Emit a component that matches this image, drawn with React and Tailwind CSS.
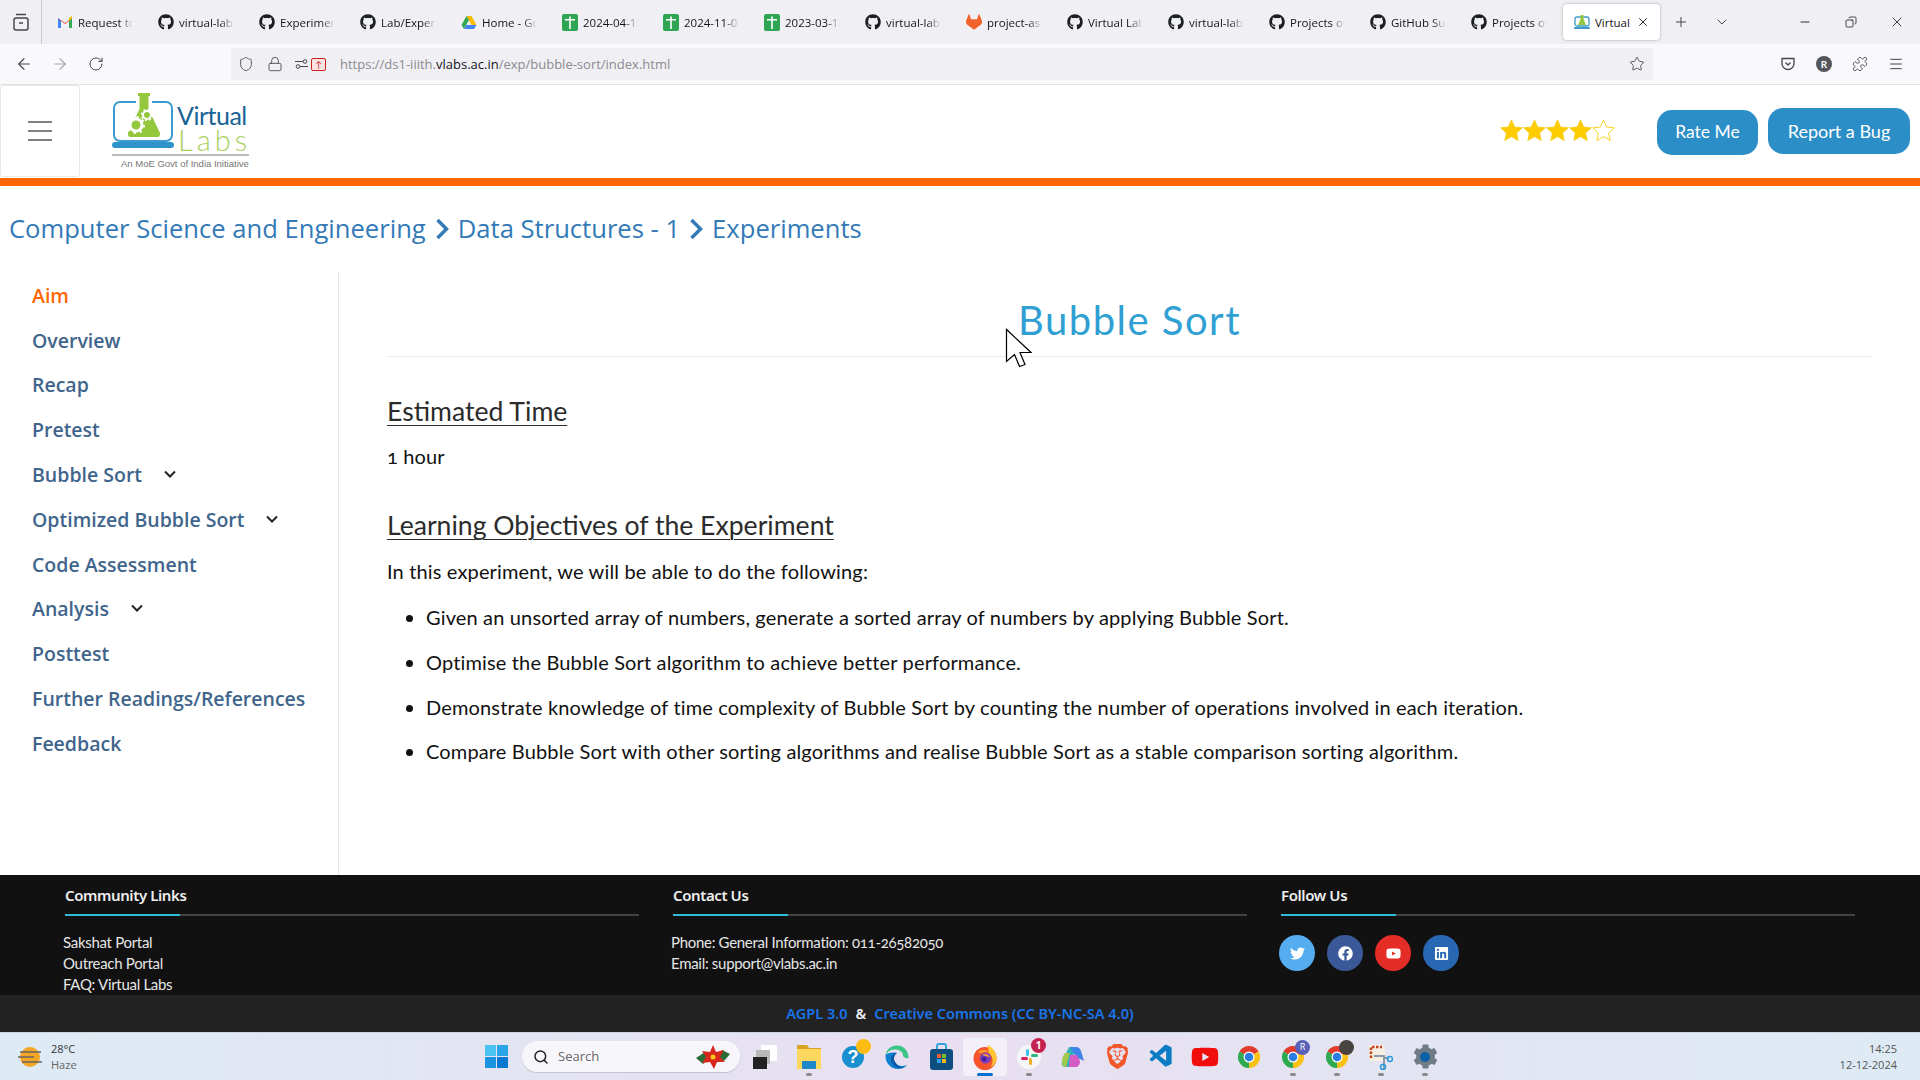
import React from 'react';
import { FaGithub, FaTwitter, FaFacebook, FaYoutube, FaLinkedin, FaCog } from 'react-icons/fa';
import { SiBrave, SiGitlab } from 'react-icons/si';
import { VscVscode } from 'react-icons/vsc';
import {
  ArrowLeft, ArrowRight, RotateCw, Shield, Lock, Star, Plus, ChevronDown, Minus, X, Copy, Menu, Puzzle, Search,
} from 'lucide-react';

const Gmail = () => (
  <svg width="16" height="14" viewBox="0 0 16 14" className="shrink-0">
    <path d="M1 3v10h3V6l4 3 4-3v7h3V3L8 8z" fill="#ea4335" />
    <path d="M1 13h3V6L1 3z" fill="#4285f4" />
    <path d="M12 13h3V3l-3 3z" fill="#34a853" />
    <path d="M12 6l3-3V1l-3 2z" fill="#fbbc04" />
  </svg>
);

const Drive = () => (
  <svg width="16" height="15" viewBox="0 0 16 15" className="shrink-0">
    <path d="M5.500 1h5l5 9h-5z" fill="#fbbc04" />
    <path d="M5.500 1L.5 10 3 14l5-9z" fill="#34a853" />
    <path d="M3 14h10l2.500-4H5.500z" fill="#4285f4" />
  </svg>
);

const Sheet = () => (
  <svg width="16" height="17" viewBox="0 0 16 17" className="shrink-0">
    <rect width="16" height="17" rx="2" fill="#2ea552" />
    <path d="M7.200 2.500h1.600V5H13v1.500H8.800V15H7.200V6.500H3V5h4.200z" fill="#fff" />
  </svg>
);

const Git = () => <FaGithub className="shrink-0 text-[16px] text-[#1b1f23]" />;
const Lab = () => <SiGitlab className="shrink-0 text-[16px] text-[#f0632c]" />;

const LabFavicon = () => (
  <svg width="16" height="16" viewBox="0 0 16 16" className="shrink-0">
    <rect x="1" y="3" width="14" height="9" rx="2" fill="none" stroke="#3d9bcb" strokeWidth="1.300" />
    <path d="M6.500 1h3v4l2.500 6H4l2.500-6z" fill="#92c83e" />
    <rect y="13" width="16" height="2" rx="1" fill="#3d9bcb" />
  </svg>
);

const tabs = [
  [Gmail, 'Request to review'],
  [Git, 'virtual-labs/exp'],
  [Git, 'Experiment dev'],
  [Git, 'Lab/Experiment'],
  [Drive, 'Home - Google'],
  [Sheet, '2024-04-15 sheet'],
  [Sheet, '2024-11-05 sheet'],
  [Sheet, '2023-03-15 sheet'],
  [Git, 'virtual-labs/ph'],
  [Lab, 'project-assign'],
  [Git, 'Virtual Labs dev'],
  [Git, 'virtual-labs/ex'],
  [Git, 'Projects overview'],
  [Git, 'GitHub Support'],
  [Git, 'Projects overview'],
];

const sideLinks = [
  { name: 'Aim', active: true },
  { name: 'Overview' },
  { name: 'Recap' },
  { name: 'Pretest' },
  { name: 'Bubble Sort', sub: true },
  { name: 'Optimized Bubble Sort', sub: true },
  { name: 'Code Assessment' },
  { name: 'Analysis', sub: true },
  { name: 'Posttest' },
  { name: 'Further Readings/References' },
  { name: 'Feedback' },
];

const objectives = [
  'Given an unsorted array of numbers, generate a sorted array of numbers by applying Bubble Sort.',
  'Optimise the Bubble Sort algorithm to achieve better performance.',
  'Demonstrate knowledge of time complexity of Bubble Sort by counting the number of operations involved in each iteration.',
  'Compare Bubble Sort with other sorting algorithms and realise Bubble Sort as a stable comparison sorting algorithm.',
];

const Logo = () => (
  <div className="relative ml-[32px] mt-[7px] h-[80px] w-[138px]">
    <svg width="66" height="58" viewBox="0 0 66 58" className="absolute left-0 top-0">
      <path d="M24 10H8a6 6 0 0 0-6 6v27a6 6 0 0 0 6 6h46a6 6 0 0 0 6-6V16a6 6 0 0 0-6-6H40" fill="none" stroke="#3a9ccf" strokeWidth="2" />
      <rect y="50" width="62" height="6" rx="3" fill="#2e94cb" />
      <path d="M26 1h12v3h-1.500v13L48 41a3 3 0 0 1-3 4H19a3 3 0 0 1-3-4l11.500-24V4H26z" fill="#93c83c" />
      <circle cx="24" cy="33" r="6" fill="#93c83c" stroke="#fff" strokeWidth="3" />
      <circle cx="24" cy="33" r="8" fill="none" stroke="#fff" strokeWidth="2" strokeDasharray="2.500 3.800" />
      <circle cx="35" cy="23" r="4" fill="#93c83c" stroke="#fff" strokeWidth="2" />
      <circle cx="35" cy="23" r="5.500" fill="none" stroke="#fff" strokeWidth="1.500" strokeDasharray="2 2.300" />
    </svg>
    <span className="absolute left-[65px] top-[8px] text-[25px] leading-[30px] tracking-[-0.5px] text-[#1a6396]">Virtual</span>
    <span className="absolute left-[66px] top-[32px] text-[29px] font-light leading-[32px] tracking-[4px] text-[#a9d05f]">Labs</span>
    <div className="absolute left-0 top-[62px] h-[2px] w-[137px] bg-[#bbbbbb]"></div>
    <span className="absolute left-[9px] top-[65px] font-['Liberation_Sans',sans-serif] text-[9.500px] leading-[14px] whitespace-nowrap text-[#777777]">An MoE Govt of India Initiative</span>
  </div>
);

const GoldStar = ({ filled }) => (
  <svg width="23" height="22" viewBox="0 0 24 23">
    <path d="M12 1l3.300 7.400 8 .8-6 5.400 1.700 7.900-7-4.100-7 4.100 1.700-7.900-6-5.400 8-.8z" fill={filled ? '#ffcc00' : '#ffffff'} stroke="#f5d020" strokeWidth="1" />
  </svg>
);

const Crumb = () => (
  <svg width="14" height="22" viewBox="0 0 14 22" className="mx-[9px] shrink-0">
    <path d="M2.500 2l9 9-9 9" fill="none" stroke="#337ab7" strokeWidth="3.500" />
  </svg>
);

const FooterHead = ({ title }) => (
  <div>
    <h3 className="h-[39px] pt-[9px] font-['Noto_Sans',sans-serif] text-[15px] leading-[22px] font-semibold tracking-[-0.4px] text-[#eeeeee]">{title}</h3>
    <div className="h-[2px] bg-[#444444]">
      <div className="h-[2px] w-[115px] bg-[#2fbcd4]"></div>
    </div>
  </div>
);

const Social = ({ bg, children }) => (
  <span className={`flex h-[36px] w-[36px] items-center justify-center rounded-full text-[15px] text-white ${bg}`}>{children}</span>
);

const Chrome = ({ badge }) => (
  <div className="relative">
    <svg width="24" height="24" viewBox="0 0 24 24">
      <path d="M12 12L2.470 6.500A11 11 0 0 1 21.530 6.500z" fill="#e33b2e" />
      <path d="M12 12L2.470 6.500A11 11 0 0 0 12 23z" fill="#2da94f" />
      <path d="M12 12L21.530 6.500A11 11 0 0 1 12 23z" fill="#fbc116" />
      <circle cx="12" cy="12" r="5.500" fill="#fff" />
      <circle cx="12" cy="12" r="4.300" fill="#2a7de1" />
    </svg>
    {badge}
  </div>
);

const TaskIcon = ({ children, dot, active }) => (
  <div className={`relative flex h-[38px] w-[44px] items-center justify-center rounded ${active ? 'bg-white/50' : ''}`}>
    {children}
    {dot && <span className="absolute bottom-[0px] left-[19px] h-[3px] w-[6px] rounded-full bg-[#8a8a8a]"></span>}
    {active && <span className="absolute bottom-[0px] left-[14px] h-[3px] w-[16px] rounded-full bg-[#0a6fd0]"></span>}
  </div>
);

const taskIcons = [
  <TaskIcon key="view">
    <div className="relative h-[24px] w-[24px]">
      <div className="absolute right-0 top-0 h-[16px] w-[16px] bg-white"></div>
      <div className="absolute left-[3px] top-[5px] h-[14px] w-[14px] bg-[#b9b9b9]"></div>
      <div className="absolute bottom-0 left-0 h-[12px] w-[14px] bg-[#222222]"></div>
    </div>
  </TaskIcon>,
  <TaskIcon key="folder" dot>
    <svg width="24" height="26" viewBox="0 0 24 26">
      <path d="M0 1h10l2 3h12v21H0z" fill="#d9a520" />
      <rect y="5" width="24" height="20" fill="#fcd75e" />
      <rect x="5" y="17" width="14" height="8" rx="1" fill="#1d87c9" />
    </svg>
  </TaskIcon>,
  <TaskIcon key="help">
    <div className="relative">
      <span className="flex h-[22px] w-[22px] items-center justify-center rounded-full bg-[#1a8fd0] font-['Liberation_Sans',sans-serif] text-[18px] font-bold leading-none text-white">?</span>
      <span className="absolute -right-[7px] -top-[7px] h-[15px] w-[15px] rounded-full bg-[#fdbc11]"></span>
    </div>
  </TaskIcon>,
  <TaskIcon key="edge">
    <svg width="24" height="24" viewBox="0 0 24 24">
      <path d="M23.500 13C23.500 5 18 .5 12 .5 6 .5 1.500 4.500 .5 10c2-4 6-6 10-5.500 6 .5 8 4 7.500 7 3 2 5.500 2 5.500 1.500z" fill="#3ac486" />
      <path d="M.5 10C0 18 6 24 13 24c4 0 7-1.500 9-4-5 2-10 1-12-3-2-3-1-7 2-9-5-1-10 0-11.500 2z" fill="#1080d0" />
      <path d="M10 17c-2-3-1-7 2-9-3-.5-6 2-6 6 0 5 4 9 9 9 2 0 3-.5 4-1-4 .5-7-1.500-9-5z" fill="#0c59a4" />
    </svg>
  </TaskIcon>,
  <TaskIcon key="store">
    <svg width="23" height="27" viewBox="0 0 23 27">
      <path d="M7 6V3a2 2 0 0 1 2-2h5a2 2 0 0 1 2 2v3" fill="none" stroke="#33a5dc" strokeWidth="2" />
      <rect y="6" width="23" height="21" rx="3" fill="#0f4f80" />
      <rect x="7" y="11" width="4" height="4" fill="#ea5a2a" />
      <rect x="12" y="11" width="4" height="4" fill="#7fba2b" />
      <rect x="7" y="16" width="4" height="4" fill="#2ea4ea" />
      <rect x="12" y="16" width="4" height="4" fill="#fbbb12" />
    </svg>
  </TaskIcon>,
  <TaskIcon key="firefox" active>
    <svg width="24" height="26" viewBox="0 0 24 26">
      <circle cx="12" cy="14.500" r="11.500" fill="#f5542d" />
      <path d="M15 1c5 3 9 7 8.500 15-1 3-3 6-6 7 3-4 3-10-1-13-1-3-2-6-1.500-9z" fill="#ffc534" />
      <path d="M5 8c3-3 9-3 12 1-3-1-5-1-7 0-2 0-4 0-5-1z" fill="#ff9a2a" />
      <circle cx="12.500" cy="14" r="5.500" fill="#7b3fc0" />
      <path d="M9 11c3-2 7-1 8 3-2-2-5-2-8-3z" fill="#ffa02a" />
      <circle cx="11" cy="15" r="2.500" fill="#4a1f9c" />
    </svg>
  </TaskIcon>,
  <TaskIcon key="slack" dot>
    <div className="relative">
      <svg width="24" height="24" viewBox="0 0 24 24">
        <circle cx="12" cy="12" r="12" fill="#f6f6f6" />
        <rect x="9" y="4" width="3" height="7" rx="1.500" fill="#36c5f0" />
        <rect x="4" y="12" width="7" height="3" rx="1.500" fill="#e01e5a" />
        <rect x="12" y="13" width="3" height="7" rx="1.500" fill="#ecb22e" />
        <rect x="14" y="9" width="7" height="3" rx="1.500" fill="#2eb67d" />
      </svg>
      <span className="absolute -right-[5px] -top-[7px] flex h-[15px] w-[15px] items-center justify-center rounded-full bg-[#c5234f] font-['Open_Sans',sans-serif] text-[10px] font-bold text-white">1</span>
    </div>
  </TaskIcon>,
  <TaskIcon key="copilot">
    <svg width="24" height="24" viewBox="0 0 24 24">
      <path d="M8 2h7l-4 12-3 8H5c-3 0-5-2-4-5z" fill="#33b0b8" />
      <path d="M9 2h6c3 0 4 2 5 4l3 10-6-3-4-4z" fill="#3f83e8" />
      <path d="M9 10h7l3 6c0 4-2 6-5 6H8z" fill="#d45bc4" />
      <path d="M1 16c0-3 1-5 3-8h5l-4 14H4c-2 0-3-3-3-6z" fill="#a2c94a" />
    </svg>
  </TaskIcon>,
  <TaskIcon key="brave"><SiBrave className="text-[25px] text-[#f1562b]" /></TaskIcon>,
  <TaskIcon key="code"><VscVscode className="text-[27px] text-[#0c7dc5]" /></TaskIcon>,
  <TaskIcon key="yt"><FaYoutube className="text-[28px] text-[#f20d0d]" /></TaskIcon>,
  <TaskIcon key="chrome"><Chrome /></TaskIcon>,
  <TaskIcon key="chrome-r" dot>
    <Chrome badge={<span className="absolute -right-[5px] -top-[5px] flex h-[15px] w-[15px] items-center justify-center rounded-full bg-[#5a62b8] text-[9px] text-white">R</span>} />
  </TaskIcon>,
  <TaskIcon key="chrome-p" dot>
    <Chrome badge={<span className="absolute -right-[5px] -top-[5px] h-[15px] w-[15px] rounded-full bg-[#4a4440]"></span>} />
  </TaskIcon>,
  <TaskIcon key="snip" dot>
    <svg width="24" height="26" viewBox="0 0 24 26">
      <rect x="0" y="1" width="16" height="16" rx="2" fill="#f5efe2" />
      <path d="M2 14V3h11" fill="none" stroke="#c8421c" strokeWidth="2.500" strokeDasharray="2.500 1.500" />
      <path d="M5 12h10v13M15 14h5" fill="none" stroke="#8b9aa6" strokeWidth="2" />
      <circle cx="21" cy="15" r="2.500" fill="none" stroke="#279ade" strokeWidth="1.500" />
      <circle cx="14" cy="23" r="2.500" fill="none" stroke="#279ade" strokeWidth="1.500" />
    </svg>
  </TaskIcon>,
  <TaskIcon key="settings" dot>
    <div className="relative flex items-center justify-center">
      <FaCog className="text-[25px] text-[#6f7b85]" />
      <span className="absolute h-[10px] w-[10px] rounded-full bg-[#0d5fa8]"></span>
    </div>
  </TaskIcon>,
];

export default function App() {
  return (
    <div className="relative flex h-[1080px] w-[1920px] flex-col overflow-hidden bg-white font-['Lato',sans-serif]">
      {/* tab strip */}
      <div className="flex h-[44px] shrink-0 items-center bg-[#f0f0f4] font-['Open_Sans',sans-serif] text-[11.500px] text-[#15141a]">
        <div className="mr-[4px] flex h-[44px] w-[42px] items-center justify-center border-r border-[#c9c9cf]">
          <svg width="16" height="18" viewBox="0 0 16 18" fill="none" stroke="#45454d" strokeWidth="1.500">
            <rect x="1" y="5" width="14" height="12" rx="2" />
            <path d="M3 1.500h10M6 10h4" />
          </svg>
        </div>
        {tabs.map(([Icon, label], i) => (
          <div key={i} className="flex w-[101px] shrink-0 items-center gap-[5px] pl-[11px]">
            <Icon />
            <span className="w-[55px] overflow-hidden whitespace-nowrap pt-[1px] [mask-image:linear-gradient(to_right,black_75%,transparent)]">{label}</span>
          </div>
        ))}
        <div className="ml-[2px] flex h-[36px] w-[97px] shrink-0 items-center gap-[5px] rounded bg-white pl-[11px] shadow-[0_0_3px_rgba(0,0,0,0.3)]">
          <LabFavicon />
          <span className="w-[38px] overflow-hidden whitespace-nowrap pt-[1px]">Virtual Labs</span>
          <X size={14} strokeWidth={1.500} className="-ml-[2px]" />
        </div>
        <div className="flex w-[41px] justify-center"><Plus size={16} strokeWidth={1.500} className="text-[#45454d]" /></div>
        <div className="flex w-[42px] justify-center"><ChevronDown size={16} strokeWidth={1.500} className="text-[#45454d]" /></div>
        <div className="flex-1"></div>
        <div className="flex w-[46px] justify-center"><Minus size={14} strokeWidth={1.500} /></div>
        <div className="flex w-[46px] justify-center"><Copy size={12} strokeWidth={1.500} className="-scale-x-100" /></div>
        <div className="flex w-[46px] justify-center"><X size={16} strokeWidth={1.200} /></div>
      </div>

      {/* url bar */}
      <div className="flex h-[41px] shrink-0 items-center border-b border-[#e4e4e7] bg-[#f9f9fb] px-[6px] text-[#45454d]">
        <div className="flex w-[36px] justify-center"><ArrowLeft size={18} strokeWidth={1.500} /></div>
        <div className="flex w-[36px] justify-center"><ArrowRight size={18} strokeWidth={1.500} className="text-[#a8a8ad]" /></div>
        <div className="flex w-[36px] justify-center"><RotateCw size={16} strokeWidth={1.500} /></div>
        <div className="ml-[117px] flex h-[32px] w-[1422px] items-center rounded bg-[#f0f0f4] pl-[7px] pr-[8px]">
          <Shield size={16} strokeWidth={1.300} />
          <Lock size={16} strokeWidth={1.300} className="ml-[13px]" />
          <svg width="13" height="10" viewBox="0 0 13 10" fill="none" stroke="#45454d" className="ml-[12px]">
            <path d="M0 2.500h8M5 7.500h8" />
            <circle cx="10" cy="2.500" r="1.800" />
            <circle cx="3" cy="7.500" r="1.800" />
          </svg>
          <span className="ml-[3px] flex h-[13px] w-[15px] items-center justify-center rounded-[2px] border border-[#c5221f] bg-[#fbe3e2] text-[9px] leading-none text-[#c5221f]">↑</span>
          <span className="ml-[14px] pt-[2px] font-['Open_Sans',sans-serif] text-[13px] text-[#8a8a90]">
            https://ds1-iiith.<span className="text-[#15141a]">vlabs.ac.in</span>/exp/bubble-sort/index.html
          </span>
          <Star size={16} strokeWidth={1.300} className="ml-auto" />
        </div>
        <div className="ml-auto flex items-center">
          <div className="flex w-[36px] justify-center">
            <svg width="14" height="15" viewBox="0 0 14 15" fill="none" stroke="#45454d" strokeWidth="1.300">
              <path d="M1 1.500h12v5a6 6 0 0 1-12 0zM4.500 5.500L7 8l2.500-2.500" />
            </svg>
          </div>
          <div className="flex w-[36px] justify-center">
            <span className="flex h-[16px] w-[16px] items-center justify-center rounded-full bg-[#55555c] text-[10px] font-bold text-white">R</span>
          </div>
          <div className="flex w-[36px] justify-center"><Puzzle size={16} strokeWidth={1.300} /></div>
          <div className="flex w-[36px] justify-center"><Menu size={16} strokeWidth={1.500} /></div>
        </div>
      </div>

      {/* site header */}
      <header className="flex h-[93px] shrink-0 items-start">
        <div className="flex h-[92px] w-[80px] items-center justify-center rounded-[3px] border border-[#e8e8e8]">
          <div className="flex w-[24px] flex-col gap-[7px]">
            <span className="h-[2px] bg-[#808080]"></span>
            <span className="h-[2px] bg-[#808080]"></span>
            <span className="h-[2px] bg-[#808080]"></span>
          </div>
        </div>
        <Logo />
        <div className="ml-auto flex h-[92px] items-center pr-[10px]">
          <div className="mb-[2px] mr-[42px] flex">
            {[1, 2, 3, 4, 5].map((n) => <GoldStar key={n} filled={n < 5} />)}
          </div>
          <button className="mt-[2px] h-[45px] w-[101px] rounded-[15px] bg-[#2b8ec6] pt-[1px] text-[17.500px] text-white">Rate Me</button>
          <button className="ml-[10px] h-[46px] w-[142px] rounded-[15px] bg-[#2b8ec6] text-[18px] text-white">Report a Bug</button>
        </div>
      </header>
      <div className="h-[8px] shrink-0 bg-[#ff6600]"></div>

      {/* breadcrumb */}
      <div className="flex h-[86px] shrink-0 items-center pl-[9px] font-['Open_Sans',sans-serif] text-[25.600px] text-[#337ab7]">
        <span>Computer Science and Engineering</span>
        <Crumb />
        <span>Data Structures - 1</span>
        <Crumb />
        <span>Experiments</span>
      </div>

      <main className="flex min-h-0 flex-1">
        <aside className="w-[339px] shrink-0 border-r border-[#e6e6e6] pl-[32px] pt-[1px] font-['Open_Sans',sans-serif] text-[19.500px] font-semibold">
          {sideLinks.map((link) => (
            <div key={link.name} className={`flex h-[44.800px] items-center ${link.active ? 'text-[#ff6600]' : 'text-[#3f658c]'}`}>
              {link.name}
              {link.sub && (
                <svg width="12" height="9" viewBox="0 0 12 9" fill="none" stroke="#222222" strokeWidth="2" className="ml-[22px]">
                  <path d="M1 1.500l5 5 5-5" />
                </svg>
              )}
            </div>
          ))}
        </aside>
        <section className="flex-1 pl-[48px] pr-[48px] text-[20px] tracking-[0.15px] text-[#111111]">
          <h1 className="h-[85px] border-b border-[#eeeeee] pt-[20px] text-center text-[40px] leading-[56px] tracking-[1.500px] text-[#2f9fd4]">Bubble Sort</h1>
          <h2 className="mt-[36px] text-[26.600px] leading-[36px] tracking-normal text-[#2b2b2b] underline underline-offset-[4px] decoration-1">Estimated Time</h2>
          <p className="mt-[11px] leading-[32px] oldstyle-nums">1 hour</p>
          <h2 className="mt-[35px] text-[26.600px] leading-[36px] tracking-normal text-[#2b2b2b] underline underline-offset-[4px] decoration-1">Learning Objectives of the Experiment</h2>
          <p className="mt-[12px] leading-[32px]">In this experiment, we will be able to do the following:</p>
          <ul className="mt-[14px] list-disc pl-[39px]">
            {objectives.map((text) => (
              <li key={text} className="h-[44.800px] leading-[32px]">{text}</li>
            ))}
          </ul>
        </section>
      </main>

      {/* footer */}
      <footer className="flex h-[120px] shrink-0 gap-[34px] overflow-hidden bg-[#111111] pl-[65px] text-[15px] leading-[21px] tracking-[-0.3px] text-[#e6e6e6]">
        <div className="w-[574px]">
          <FooterHead title="Community Links" />
          <div className="-ml-[2px] mt-[16px]">
            <p>Sakshat Portal</p>
            <p>Outreach Portal</p>
            <p>FAQ: Virtual Labs</p>
          </div>
        </div>
        <div className="w-[574px]">
          <FooterHead title="Contact Us" />
          <div className="-ml-[2px] mt-[16px]">
            <p className="oldstyle-nums">Phone: General Information: 011-26582050</p>
            <p>Email: support@vlabs.ac.in</p>
          </div>
        </div>
        <div className="w-[574px]">
          <FooterHead title="Follow Us" />
          <div className="-ml-[2px] mt-[19px] flex gap-[12px]">
            <Social bg="bg-[#55acee]"><FaTwitter /></Social>
            <Social bg="bg-[#3b5998]"><FaFacebook /></Social>
            <Social bg="bg-[#e52d27]"><FaYoutube /></Social>
            <Social bg="bg-[#2867b2]"><FaLinkedin /></Social>
          </div>
        </div>
      </footer>
      <div className="flex h-[37px] shrink-0 items-center justify-center gap-[8px] bg-[#222222] font-['Noto_Sans',sans-serif] text-[14.500px] font-semibold text-[#1a73e8]">
        <span>AGPL 3.0</span>
        <span className="text-[#eeeeee]">&amp;</span>
        <span>Creative Commons (CC BY-NC-SA 4.0)</span>
      </div>

      {/* windows taskbar */}
      <div className="flex h-[48px] shrink-0 items-center border-t border-[#cdd6dc] bg-gradient-to-r from-[#deebf4] via-[#e8dff0] to-[#deebf4] font-['Open_Sans',sans-serif] text-[11px] text-[#333333]">
        <div className="flex w-[485px] shrink-0 items-center gap-[9px] pl-[18px]">
          <svg width="24" height="22" viewBox="0 0 24 22">
            <circle cx="12" cy="11" r="10" fill="#f5a623" />
            <path d="M2 6h21M0 11h16M4 16h20" stroke="#666666" strokeWidth="1.500" />
          </svg>
          <div className="leading-[16px]">
            <p>28°C</p>
            <p className="text-[#666666]">Haze</p>
          </div>
        </div>
        <svg width="23" height="23" viewBox="0 0 23 23" className="shrink-0">
          <rect width="11" height="11" fill="#4cc2f1" />
          <rect x="12" width="11" height="11" fill="#2aa5e8" />
          <rect y="12" width="11" height="11" fill="#1b93df" />
          <rect x="12" y="12" width="11" height="11" fill="#0b78d1" />
        </svg>
        <div className="ml-[14px] flex h-[31px] w-[218px] shrink-0 items-center rounded-full bg-white/70 pl-[11px] pr-[10px] shadow-[0_1px_1px_rgba(0,0,0,0.15)]">
          <Search size={16} strokeWidth={2.200} className="text-[#222222]" />
          <span className="ml-[9px] text-[13px] text-[#666666]">Search</span>
          <svg width="34" height="26" viewBox="0 0 34 26" className="ml-auto">
            <path d="M0 14l9-6 4 6-6 6zM34 10l-8-4-4 6 6 5z" fill="#2b6b35" />
            <path d="M17 1l3 7 8-2-4 7 5 5-8 0-3 7-4-7-8 1 4-6-4-6 8 1z" fill="#d8261c" />
            <circle cx="17" cy="13" r="2.500" fill="#f5c518" />
          </svg>
        </div>
        <div className="ml-[3px] flex shrink-0 items-center">{taskIcons}</div>
        <div className="ml-auto pr-[23px] text-right leading-[16px] text-[#555555]">
          <p>14:25</p>
          <p>12-12-2024</p>
        </div>
      </div>

      {/* screen recording cursor */}
      <svg width="27" height="40" viewBox="0 0 27 40" className="absolute left-[1005px] top-[328px]">
        <path d="M1.500 1.500v32l8-7 5 12 5.500-2-5-12h11z" fill="#fff" stroke="#000" strokeWidth="1.200" />
      </svg>
    </div>
  );
}
